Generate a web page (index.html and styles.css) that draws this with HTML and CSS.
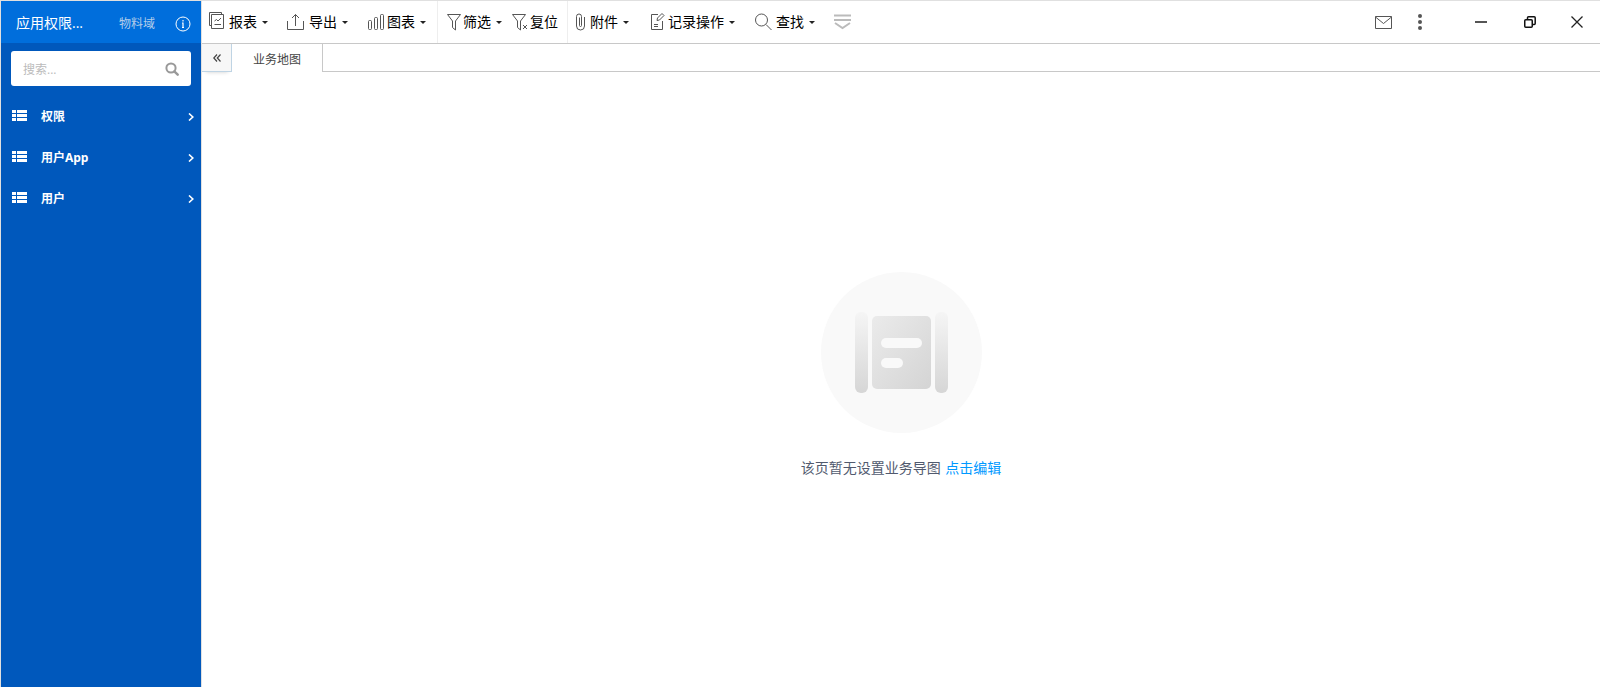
FILE: index.html
```
<!DOCTYPE html>
<html lang="zh-CN">
<head>
  <meta charset="UTF-8">
  <meta name="viewport" content="width=device-width, initial-scale=1.0">
  <title>业务地图</title>
  <link rel="stylesheet" href="styles.css">
</head>
<body>
  <div class="app">

    <!-- Sidebar -->
    <aside class="sidebar">
      <header class="sidebar-header">
        <h1>应用权限...</h1>
        <span class="domain">物料域</span>
        <button class="info-btn" aria-label="信息">
          <svg width="16" height="16" viewBox="0 0 16 16" fill="none" stroke="#fff">
            <circle cx="8" cy="8" r="7"/>
            <path d="M8 4v1.5M7 7h1v4.5M7 11.5h2" stroke-width="1.2"/>
          </svg>
        </button>
      </header>

      <form class="search" role="search">
        <input type="text" placeholder="搜索..." aria-label="搜索">
        <button type="button" aria-label="搜索">
          <svg width="14" height="14" viewBox="0 0 14 14" fill="none" stroke="#999" stroke-width="2">
            <circle cx="6" cy="6" r="4.6"/>
            <path d="M9.3 9.3l3.4 3.4" stroke-width="2.4" stroke-linecap="round"/>
          </svg>
        </button>
      </form>

      <nav class="menu">
        <a href="#">
          <svg width="15" height="11" viewBox="0 0 15 11" fill="#fff"><path d="M0 0h4v3H0zM5 0h10v3H5zM0 4h4v3H0zM5 4h10v3H5zM0 8h4v3H0zM5 8h10v3H5z"/></svg>
          <span>权限</span>
          <svg class="arrow" width="6" height="8" viewBox="0 0 6 8" fill="none" stroke="#fff" stroke-width="1.6"><path d="M1 .5L4.8 4 1 7.5"/></svg>
        </a>
        <a href="#">
          <svg width="15" height="11" viewBox="0 0 15 11" fill="#fff"><path d="M0 0h4v3H0zM5 0h10v3H5zM0 4h4v3H0zM5 4h10v3H5zM0 8h4v3H0zM5 8h10v3H5z"/></svg>
          <span>用户App</span>
          <svg class="arrow" width="6" height="8" viewBox="0 0 6 8" fill="none" stroke="#fff" stroke-width="1.6"><path d="M1 .5L4.8 4 1 7.5"/></svg>
        </a>
        <a href="#">
          <svg width="15" height="11" viewBox="0 0 15 11" fill="#fff"><path d="M0 0h4v3H0zM5 0h10v3H5zM0 4h4v3H0zM5 4h10v3H5zM0 8h4v3H0zM5 8h10v3H5z"/></svg>
          <span>用户</span>
          <svg class="arrow" width="6" height="8" viewBox="0 0 6 8" fill="none" stroke="#fff" stroke-width="1.6"><path d="M1 .5L4.8 4 1 7.5"/></svg>
        </a>
      </nav>
    </aside>

    <main class="main">

      <!-- Toolbar -->
      <div class="toolbar">
        <div class="group">
          <button class="tool">
            <svg width="18" height="20" viewBox="0 0 18 20">
              <path d="M2.5 13.5h-2V.5h12v2M2.5 2.500h12v14h-12zM5.500 12.500h6.500M5.500 9l2-1.500 1.500 1.500 3-3"/>
            </svg>
            <span>报表</span><i class="caret"></i>
          </button>
          <button class="tool">
            <svg width="20" height="18" viewBox="0 0 20 18">
              <path d="M.5 8v8.500h16V8M8.500 13V1.500M5 5l3.500-3.500L12 5"/>
            </svg>
            <span>导出</span><i class="caret"></i>
          </button>
          <button class="tool">
            <svg width="18" height="18" viewBox="0 0 18 18">
              <rect x="1.500" y="7.500" width="3" height="9" rx="1"/>
              <rect x="7.500" y="4.500" width="3" height="12" rx="1"/>
              <rect x="13.500" y="1.500" width="3" height="15" rx="1"/>
            </svg>
            <span>图表</span><i class="caret"></i>
          </button>
        </div>
        <div class="group filters">
          <button class="tool">
            <svg width="14" height="18" viewBox="0 0 14 18">
              <path d="M.5 1.500h13L8.500 8v9L5.500 14.500V8z"/>
            </svg>
            <span>筛选</span><i class="caret"></i>
          </button>
          <button class="tool">
            <svg width="16" height="18" viewBox="0 0 16 18">
              <path d="M.5 1.500h13L8.500 8v9L5.500 14.500V8z"/>
              <path d="M11 12l4 4M15 12l-4 4"/>
            </svg>
            <span>复位</span>
          </button>
        </div>
        <div class="group attachments">
          <button class="tool">
            <svg width="12" height="18" viewBox="0 0 12 18">
              <path d="M3.500 4.500v8a1 1 0 002 0v-9a2.500 2.500 0 00-5 0V13a4 4 0 008 0V4"/>
            </svg>
            <span>附件</span><i class="caret"></i>
          </button>
          <button class="tool">
            <svg width="18" height="18" viewBox="0 0 18 18">
              <path d="M10 1.500H3.500v15h11V8M9 7.500l.5-2.500 4.500-4.500 2 2L11.500 7zM6 11.500h4M6 13.500h4"/>
            </svg>
            <span>记录操作</span><i class="caret"></i>
          </button>
          <button class="tool">
            <svg width="20" height="18" viewBox="0 0 20 18">
              <circle cx="7.500" cy="7" r="6"/>
              <path d="M12 11.500l5.500 5.500"/>
            </svg>
            <span>查找</span><i class="caret"></i>
          </button>
          <button class="tool more" aria-label="更多">
            <svg width="17" height="18" viewBox="0 0 17 18">
              <path d="M0 2.500h17M0 7h17M1 10l7.500 5L16 10"/>
            </svg>
          </button>
        </div>

        <div class="window-actions">
          <button aria-label="消息">
            <svg width="17" height="13" viewBox="0 0 17 13" fill="none" stroke="#555"><path d="M.5 .5h16v12H.5zM.5 1l8 6.500 8-6.500"/></svg>
          </button>
          <button aria-label="菜单">
            <svg width="4" height="16" viewBox="0 0 4 16" fill="#555"><circle cx="2" cy="2" r="2"/><circle cx="2" cy="8" r="2"/><circle cx="2" cy="14" r="2"/></svg>
          </button>
          <button class="minimize" aria-label="最小化">
            <svg width="12" height="12" viewBox="0 0 12 12" stroke="#555" stroke-width="2"><path d="M0 6h12"/></svg>
          </button>
          <button aria-label="还原">
            <svg width="12" height="12" viewBox="0 0 12 12" fill="none" stroke="#111" stroke-width="1.5"><rect x=".75" y="3.750" width="7.500" height="7.500" rx="1"/><path d="M3.500 3.500v-1.700a1 1 0 011-1h5.700a1 1 0 011 1v5.700a1 1 0 01-1 1H8.500"/></svg>
          </button>
          <button aria-label="关闭">
            <svg width="12" height="12" viewBox="0 0 12 12" stroke="#222" stroke-width="1.3"><path d="M.5 .5l11 11M11.500 .5l-11 11"/></svg>
          </button>
        </div>
      </div>

      <!-- Tabs -->
      <div class="tabs">
        <button class="collapse" aria-label="收起">
          <svg width="8" height="8" viewBox="0 0 8 8" fill="none" stroke="#444" stroke-width="1.2"><path d="M4 .5L.8 4 4 7.500M7.500 .5L4.300 4l3.200 3.500"/></svg>
        </button>
        <button class="tab">业务地图</button>
        <div class="tabs-rest"></div>
      </div>

      <!-- Empty state -->
      <section class="empty">
        <svg width="161" height="161" viewBox="0 0 161 161">
          <defs>
            <linearGradient id="bar" x1="0" y1="0" x2="0" y2="1">
              <stop offset="0" stop-color="#f5f5f5"/>
              <stop offset="1" stop-color="#d6d6d6"/>
            </linearGradient>
            <linearGradient id="sheet" x1="0" y1="0" x2="1" y2="1">
              <stop offset="0" stop-color="#ebebeb"/>
              <stop offset="1" stop-color="#d4d4d4"/>
            </linearGradient>
          </defs>
          <circle cx="80.500" cy="80.500" r="80.500" fill="#f9f9f9"/>
          <rect x="34" y="40" width="13" height="81" rx="6" fill="url(#bar)"/>
          <rect x="114" y="40" width="13" height="81" rx="6" fill="url(#bar)"/>
          <rect x="51" y="44" width="59" height="73" rx="5" fill="url(#sheet)"/>
          <rect x="60" y="66" width="41" height="10" rx="5" fill="#f9f9f9"/>
          <rect x="60" y="86" width="22" height="10" rx="5" fill="#f9f9f9"/>
        </svg>
        <p>该页暂无设置业务导图 <a href="#">点击编辑</a></p>
      </section>
    </main>
  </div>
</body>
</html>
```
FILE: styles.css
```
* { margin: 0; padding: 0; box-sizing: border-box; }

body {
  font-family: "Open Sans", "Noto Sans CJK SC", sans-serif;
  font-size: 14px;
  background: #fff;
}

button {
  font: inherit;
  color: inherit;
  background: none;
  border: none;
  cursor: pointer;
}

a { text-decoration: none; }

svg { display: block; flex-shrink: 0; }

.app {
  display: flex;
  min-height: 100vh;
  border-top: 1px solid #e0e0e0;
  border-left: 1px solid #e0e0e0;
}

/* Sidebar */
.sidebar {
  flex: 0 0 201px;
  min-width: 0;
  background: #0058bc;
  border-right: 1px solid #e0e0e0;
  color: #fff;
}

.sidebar-header {
  display: flex;
  align-items: center;
  height: 42px;
  padding: 0 10px 0 15px;
  background: #006edc;
}

.sidebar-header h1 {
  flex: 1;
  font-size: 14px;
  font-weight: normal;
}

.domain {
  margin: 2px 20px 0 0;
  font-size: 12px;
  color: #b3cdea;
}

.info-btn { margin-top: 4px; }

.search {
  display: flex;
  align-items: center;
  height: 35px;
  margin: 8px 10px 9px;
  padding: 0 12px;
  background: #fff;
  border-radius: 3px;
}

.search input {
  flex: 1;
  min-width: 0;
  padding-top: 2px;
  border: none;
  outline: none;
  font: inherit;
  font-size: 12px;
}

.search input::placeholder { color: #bbb; }

.menu a {
  display: flex;
  align-items: center;
  height: 41px;
  padding: 0 7px 0 11px;
  color: #fff;
  font-size: 12px;
  font-weight: bold;
}

.menu span {
  flex: 1;
  margin-left: 14px;
}

.menu .arrow { margin-top: 3px; }

/* Main */
.main {
  flex: 1;
  display: flex;
  flex-direction: column;
  min-width: 0;
}

.toolbar {
  display: flex;
  height: 43px;
  border-bottom: 1px solid #c8c8c8;
  color: #000;
}

.group {
  display: flex;
  align-items: center;
  gap: 19px;
  padding: 0 11px 0 7px;
}

.filters {
  gap: 10px;
  padding: 0 9px;
  border-left: 1px solid #eee;
  border-right: 1px solid #eee;
}

.attachments { padding-left: 8px; }

.tool {
  display: flex;
  align-items: center;
  white-space: nowrap;
}

.tool svg {
  fill: none;
  stroke: #555;
}

.tool span {
  margin-left: 2px;
  padding-bottom: 2px;
}

.more svg {
  stroke: #bbb;
  stroke-width: 2;
}

.caret {
  margin-left: 5px;
  border: 3px solid transparent;
  border-top-color: #222;
  border-bottom: none;
}

.window-actions {
  display: flex;
  align-items: center;
  gap: 22px;
  margin-left: auto;
  padding-right: 17px;
}

.window-actions button {
  min-width: 12px;
  display: flex;
  justify-content: center;
}

.window-actions .minimize { margin: 0 15px 0 27px; }

.window-actions button:last-child { margin-left: 13px; }

/* Tabs */
.tabs {
  display: flex;
  height: 28px;
}

.collapse {
  display: flex;
  align-items: center;
  justify-content: center;
  width: 30px;
  background: #f7f7f7;
  border-right: 1px solid #bfd4e4;
  border-bottom: 1px solid #bfd4e4;
  box-shadow: 0 4px 4px -4px #ccc;
}

.tab {
  padding: 2px 21px 0;
  color: #444;
  font-size: 12px;
}

.tabs-rest {
  flex: 1;
  border-left: 1px solid #c8c8c8;
  border-bottom: 1px solid #c8c8c8;
}

/* Empty state */
.empty {
  flex: 1;
  display: flex;
  flex-direction: column;
  align-items: center;
  justify-content: center;
  padding-bottom: 9px;
}

.empty p {
  margin-top: 25px;
  line-height: 20px;
  color: #515a6e;
}

.empty a {
  margin-left: 1px;
  color: #0099ff;
}
```
